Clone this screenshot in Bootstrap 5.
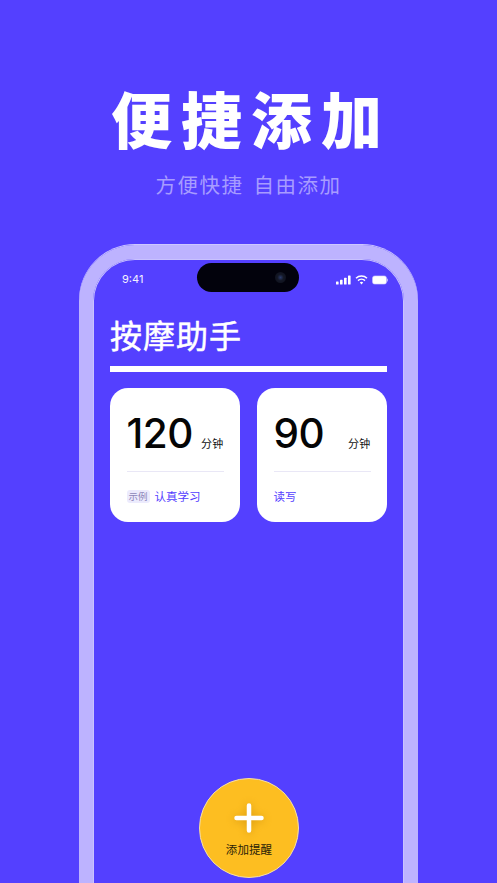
<!DOCTYPE html>
<html lang="zh">
<head>
<meta charset="utf-8">
<title>便捷添加</title>
<link href="https://cdn.jsdelivr.net/npm/bootstrap@5.3.0/dist/css/bootstrap.min.css" rel="stylesheet">
<style>
html,body{margin:0;height:883px;overflow:hidden;background:#5440ff;}
body{font-family:"Noto Sans CJK SC","Noto Sans",sans-serif;color:#fff;}
.stage{width:497px;height:883px;position:relative;overflow:hidden;}
.hero-title{font-size:61px;font-weight:900;line-height:80px;letter-spacing:9px;margin:78px 0 0 5px;color:#fff;}
.hero-sub{font-size:20.5px;line-height:30px;letter-spacing:1.5px;color:#a79cff;margin:11px 0 0;word-spacing:4px;}
.phone{width:339px;height:660px;margin:46px 0 0 79px;border:14px solid #bdb3ff;border-bottom:0;border-radius:56px 56px 0 0;box-shadow:0 0 0 1px #c9c2ff inset,0 -1px 0 #cdc7ff;padding:0 17px;}
.statusbar{height:33px;margin:4px -17px 0;padding:0 16px 0 29px;}
.clock{font-family:"Inter",sans-serif;font-size:11px;color:#f3f1ff;}
.island{width:102px;height:29px;background:#02020c;border-radius:15px;position:absolute;left:197px;top:263px;}
.lens{width:11px;height:11px;border-radius:50%;background:radial-gradient(circle,#2a3a6a 0,#141826 40%,#0b0d18 100%);position:absolute;right:13px;top:9px;}
.app-title{font-size:32px;font-weight:400;-webkit-text-stroke:.5px #fff;line-height:44px;margin:16px 0 0;letter-spacing:1px;color:#fff;}
.rule{height:5.5px;background:#fff;margin-top:10px;width:277px;}
.tiles{display:flex;gap:17px;margin-top:16.5px;width:277px;}
.tile{width:130px;height:134px;background:#fff;border-radius:18px;padding:16.5px 16.5px 0;color:#000;}
.num{font-family:"Inter",sans-serif;font-size:40.5px;line-height:58px;font-weight:450;letter-spacing:-.5px;color:#050505;}
.unit{font-size:11px;line-height:14px;color:#111;padding-bottom:12.5px;letter-spacing:.2px;}
.sep{height:1px;background:#e9e7f6;margin-top:8.5px;}
.foot{margin-top:16px;font-size:11.5px;font-weight:400;line-height:17px;color:#5440ff;}
.tag{font-size:9.5px;font-weight:400;line-height:13px;background:#ecebfd;color:#8d86b8;border-radius:3px;padding:0 2px;margin-right:5px;}
.fab{position:absolute;left:199px;top:778px;width:100px;height:100px;border-radius:50%;background:#fdbe21;border:1px solid #f5dfa8;color:#2a2208;text-align:center;}
.fab svg{display:block;margin:24px auto 0;filter:drop-shadow(0 1px 4px rgba(170,110,0,.45));}
.fab-label{font-size:11.5px;line-height:16px;margin-top:8px;letter-spacing:.1px;}
</style>
</head>
<body>
<div class="stage">
  <h1 class="hero-title text-center">便捷添加</h1>
  <p class="hero-sub text-center">方便快捷 自由添加</p>
  <div class="phone">
    <div class="statusbar d-flex justify-content-between align-items-center">
      <span class="clock">9:41</span>
      <svg width="52" height="10" viewBox="0 0 52 10" aria-hidden="true">
        <g fill="#fff"><rect x="0" y="6.500" width="2.600" height="3" rx=".6"/><rect x="4" y="4.800" width="2.600" height="4.700" rx=".6"/><rect x="8" y="2.700" width="2.600" height="6.800" rx=".6"/><rect x="12" y=".5" width="2.600" height="9" rx=".6"/></g>
        <path d="M20 3.300a8 8 0 0 1 11 0M22 5.600a5 5 0 0 1 7 0" fill="none" stroke="#fff" stroke-width="1.500"/><path d="M23.800 7.500a2.400 2.400 0 0 1 3.400 0L25.500 9.500z" fill="#fff"/>
        <rect x="36.500" y=".9" width="14" height="8.200" rx="2.200" fill="#fff" stroke="#c9c2ff" stroke-width=".6"/><rect x="51" y="3.500" width="1" height="3" rx=".5" fill="#b5abff"/>
      </svg>
    </div>
    <h2 class="app-title">按摩助手</h2>
    <div class="rule"></div>
    <div class="tiles">
      <div class="tile">
        <div class="d-flex justify-content-between align-items-end"><span class="num">120</span><span class="unit">分钟</span></div>
        <div class="sep"></div>
        <div class="foot d-flex align-items-center"><span class="tag">示例</span><span>认真学习</span></div>
      </div>
      <div class="tile">
        <div class="d-flex justify-content-between align-items-end"><span class="num">90</span><span class="unit">分钟</span></div>
        <div class="sep"></div>
        <div class="foot"><span>读写</span></div>
      </div>
    </div>
  </div>
  <div class="island"><span class="lens"></span></div>
  <div class="fab">
    <svg width="30" height="30" viewBox="0 0 30 30" aria-hidden="true"><path d="M15 2.500v25M2.500 15h25" stroke="#fff" stroke-width="4.500" stroke-linecap="round"/></svg>
    <div class="fab-label">添加提醒</div>
  </div>
</div>
<script src="https://cdn.jsdelivr.net/npm/bootstrap@5.3.0/dist/js/bootstrap.bundle.min.js"></script>
</body>
</html>
